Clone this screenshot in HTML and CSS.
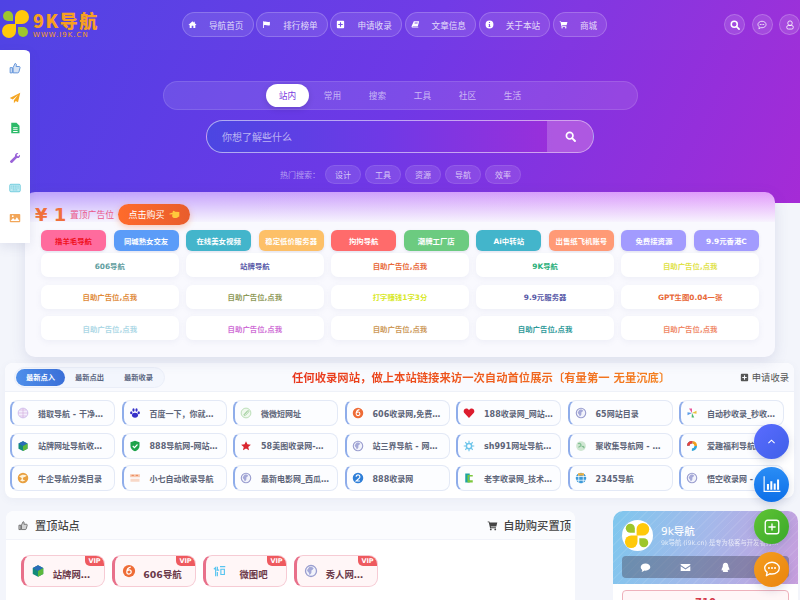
FILE: index.html
```html
<!DOCTYPE html>
<html lang="zh">
<head>
<meta charset="utf-8">
<title>9K导航</title>
<link rel="stylesheet" href="styles.css">
</head>
<body>
<svg class="defs" aria-hidden="true">
  <symbol id="i-search" viewBox="0 0 16 16"><circle cx="6.800" cy="6.800" r="4.800" fill="none" stroke="currentColor" stroke-width="2.400"/><path d="M10.400 10.400 14.500 14.500" stroke="currentColor" stroke-width="2.800" stroke-linecap="round"/></symbol>
  <symbol id="i-globe" viewBox="0 0 16 16"><circle cx="8" cy="8" r="6.300" fill="#f2f3fb" stroke="#9a9ecf" stroke-width="1.500"/><path d="M6 3.500C8 3 10 3.500 11 5 10 7 8 6.500 8.500 8.500 9 10.500 7 12 6 12.500 6.500 10 4 9 3.500 7.500 4 6 5 5 6 3.500z" fill="#a5a9d8"/></symbol>
  <symbol id="i-thumb" viewBox="0 0 16 16"><path d="M1.500 7.500h3v7h-3zM5.500 7.500 8 2c1.500 0 2 1 1.800 2.200L9.500 6h4c1 0 1.500.8 1.200 1.700l-1.500 5.600c-.2.800-.8 1.200-1.600 1.200H5.500z" fill="currentColor" fill-opacity=".25" stroke="currentColor" stroke-width="1.200" stroke-linejoin="round"/></symbol>
  <symbol id="i-chat" viewBox="0 0 16 16"><path d="M8 2c3.600 0 6.500 2.300 6.500 5.200S11.600 12.400 8 12.400c-.7 0-1.300-.1-1.900-.2L3 14l.7-3C2.300 10.100 1.500 8.700 1.500 7.200 1.500 4.300 4.400 2 8 2z" fill="none" stroke="currentColor" stroke-width="1.200" stroke-linejoin="round"/><circle cx="5.300" cy="7.200" r=".9" fill="currentColor"/><circle cx="8" cy="7.200" r=".9" fill="currentColor"/><circle cx="10.700" cy="7.200" r=".9" fill="currentColor"/></symbol>
  <symbol id="i-clover" viewBox="0 0 30 30"><path d="M14 15V8A7 7 0 1 1 21 15z" fill="#ffc90a"/><path d="M15 15V22A7 7 0 1 1 8 15z" fill="#ffc90a"/><path d="M12 12H7A5 5 0 1 1 12 7z" fill="#9ec62c"/><path d="M17 18H22A5 5 0 1 1 17 23z" fill="#9ec62c"/></symbol>
</svg>

<section class="hero">
  <header class="topbar">
    <a class="logo">
      <svg class="logo-mark"><use href="#i-clover"/></svg>
      <span class="logo-text"><b>9K导航</b><small>WWW.I9K.CN</small></span>
    </a>
    <nav class="mainnav">
      <a class="navpill"><svg class="nav-ic" viewBox="0 0 16 16"><path d="M8 2 1 8.300l1 1L3 8.500V14h3.500v-4h3v4H13V8.500l1 .8 1-1-3-2.700V3h-2v1.800z" fill="#fff"/></svg>导航首页</a>
      <a class="navpill"><svg class="nav-ic" viewBox="0 0 16 16"><path d="M2 2v12h1.500V9.500c3-1.500 5.500 1.200 10.500 0V3C9 4.500 6.500 1.500 3.500 3V2z" fill="#fff"/></svg>排行榜单</a>
      <a class="navpill"><svg class="nav-ic" viewBox="0 0 16 16"><path fill-rule="evenodd" d="M3 1.500h10A1.500 1.500 0 0 1 14.500 3v10a1.500 1.500 0 0 1-1.500 1.500H3A1.500 1.500 0 0 1 1.500 13V3A1.500 1.500 0 0 1 3 1.500zM7 4v3H4v2h3v3h2V9h3V7H9V4z" fill="#fff"/></svg>申请收录</a>
      <a class="navpill"><svg class="nav-ic" viewBox="0 0 16 16"><path fill-rule="evenodd" d="M5 2h9.500l-2.500 9.500H3.500c-.8 0-1 1 0 1H12l1-.5v1.500H3c-2 0-2.300-1.700-1.800-3zM6.500 4.500 6.200 6h5.500l.3-1.500z" fill="#fff"/></svg>文章信息</a>
      <a class="navpill"><svg class="nav-ic" viewBox="0 0 16 16"><path fill-rule="evenodd" d="M8 1a7 7 0 1 1 0 14A7 7 0 0 1 8 1zM7 3.500v2h2v-2zM6.300 7v1.200H7v3h-.7v1.200h3.400v-1.200H9V7z" fill="#fff"/></svg>关于本站</a>
      <a class="navpill"><svg class="nav-ic" viewBox="0 0 16 16"><path d="M1 2h2.500l.4 1.500H15l-1.500 6H5.500l.3 1.200H13V12H4.500L2.500 3.300H1z" fill="#fff"/><circle cx="5.500" cy="13.700" r="1.300" fill="#fff"/><circle cx="12" cy="13.700" r="1.300" fill="#fff"/></svg>商城</a>
    </nav>
    <div class="toolbtns">
      <a class="circle"><svg class="circle-ic"><use href="#i-search"/></svg></a>
      <a class="circle"><svg class="circle-ic"><use href="#i-chat"/></svg></a>
      <a class="circle"><svg class="circle-ic" viewBox="0 0 16 16"><circle cx="8" cy="5" r="3.600" fill="none" stroke="#fff" stroke-width="1.300"/><rect x="2.800" y="8.800" width="10.400" height="5.700" rx="2.400" fill="none" stroke="#fff" stroke-width="1.300"/></svg></a>
    </div>
  </header>

  <div class="finder">
    <div class="scopes">
      <a class="scope active">站内</a><a class="scope">常用</a><a class="scope">搜索</a><a class="scope">工具</a><a class="scope">社区</a><a class="scope">生活</a>
    </div>
    <form class="searchbox">
      <span class="placeholder">你想了解些什么</span>
      <span class="searchbtn"><svg class="searchbtn-ic"><use href="#i-search"/></svg></span>
    </form>
    <div class="hot">
      <span class="hot-label">热门搜索：</span>
      <a class="hotpill">设计</a><a class="hotpill">工具</a><a class="hotpill">资源</a><a class="hotpill">导航</a><a class="hotpill">效率</a>
    </div>
  </div>
</section>

<aside class="rail">
  <svg class="rail-ic c-blue"><use href="#i-thumb"/></svg>
  <svg class="rail-ic" viewBox="0 0 16 16"><path d="M15 1 1 8l4 2 7-6-5.500 7v4l2.500-3 3 1.500z" fill="#f5a623"/></svg>
  <svg class="rail-ic" viewBox="0 0 16 16"><path fill-rule="evenodd" d="M3 1h7l4 4v10H3zM5.500 7v1.200h6V7zm0 2.500v1.200h6V9.500zm0 2.500v1.200h6V12z" fill="#2dbb6a"/></svg>
  <svg class="rail-ic" viewBox="0 0 16 16"><path d="M14.500 3.500 12 6 10 4l2.500-2.500C10 .5 7.500 2.500 8 5.500L1.500 12c-1 1 1.500 3.500 2.500 2.500L10.500 8c3 .5 5-2 4-4.500z" fill="#9a63d8"/></svg>
  <svg class="rail-ic" viewBox="0 0 16 16"><rect x="1" y="3" width="14" height="10" rx="1.500" fill="#bfeaf2" stroke="#56c2d6"/><path d="M3 5.500h10M3 8h10M5 10.500h6" stroke="#56c2d6" stroke-dasharray="1.500 .8"/></svg>
  <svg class="rail-ic" viewBox="0 0 16 16"><rect x="1" y="2.500" width="14" height="11" rx="1.200" fill="#f2a65a"/><path d="M2 12l3.500-4 2.500 2.500 2.500-3.500L14 12z" fill="#fff"/><circle cx="5" cy="5.500" r="1.200" fill="#fff"/></svg>
</aside>

<section class="adpanel">
  <div class="ad-head">
    <span class="ad-price">¥ 1</span>
    <span class="ad-label">置顶广告位</span>
    <a class="ad-buy">点击购买
      <svg class="ad-hand" viewBox="0 0 16 16"><path d="M15 4.500 9 4 7 2.500C5.500 3 5 4 5.500 5L1 6.500c-.8.700-.3 1.500.5 1.500L5 7.500 4.500 10c.3 2 2 3 4 3h2c2 0 3-2 4.500-2z" fill="#ffc93c"/></svg>
    </a>
  </div>
  <div class="ad-pills">
    <a class="adpill p1 red">撸羊毛导航</a>
    <a class="adpill p2">同城熟女交友</a>
    <a class="adpill p3">在线美女视频</a>
    <a class="adpill p4">稳定低价服务器</a>
    <a class="adpill p5">拘拘导航</a>
    <a class="adpill p6">潮牌工厂店</a>
    <a class="adpill p3">Ai中转站</a>
    <a class="adpill p8">出售纸飞机账号</a>
    <a class="adpill p9">免费接资源</a>
    <a class="adpill p9">9.9元香港C</a>
  </div>
  <div class="ad-grid">
    <a class="adcell t1">606导航</a>
    <a class="adcell t2">站牌导航</a>
    <a class="adcell t3">自助广告位,点我</a>
    <a class="adcell t4">9K导航</a>
    <a class="adcell t5">自助广告位,点我</a>
    <a class="adcell t6">自助广告位,点我</a>
    <a class="adcell t7">自助广告位,点我</a>
    <a class="adcell t8">打字赚钱1字3分</a>
    <a class="adcell t2">9.9元服务器</a>
    <a class="adcell t3">GPT生图0.04一张</a>
    <a class="adcell t9">自助广告位,点我</a>
    <a class="adcell t10">自助广告位,点我</a>
    <a class="adcell t11">自助广告位,点我</a>
    <a class="adcell t12">自助广告位,点我</a>
    <a class="adcell t13">自助广告位,点我</a>
  </div>
</section>

<section class="recent">
  <div class="recent-head">
    <div class="rtabs"><a class="rtab active">最新点入</a><a class="rtab">最新点出</a><a class="rtab">最新收录</a></div>
    <strong class="notice">任何收录网站，做上本站链接来访一次自动首位展示〔有量第一 无量沉底〕</strong>
    <a class="apply"><svg class="apply-ic" viewBox="0 0 16 16"><path fill-rule="evenodd" d="M3 1.500h10A1.500 1.500 0 0 1 14.500 3v10a1.500 1.500 0 0 1-1.500 1.500H3A1.500 1.500 0 0 1 1.500 13V3A1.500 1.500 0 0 1 3 1.500zM7 4v3H4v2h3v3h2V9h3V7H9V4z" fill="#555"/></svg>申请收录</a>
  </div>
  <div class="sites">
    <a class="site"><svg class="site-ic" viewBox="0 0 16 16"><circle cx="8" cy="8" r="6.500" fill="#f3eefc" stroke="#c7b3ea"/><path d="M8 1.500v13M1.500 8h13M3.500 4h9M3.500 12h9" stroke="#d5a8dc" stroke-width=".8"/></svg><span>猎取导航 - 干净…</span></a>
    <a class="site"><svg class="site-ic" viewBox="0 0 16 16"><ellipse cx="8" cy="11" rx="4" ry="3.200" fill="#3530c8"/><ellipse cx="3" cy="7.500" rx="1.500" ry="2" fill="#3530c8"/><ellipse cx="13" cy="7.500" rx="1.500" ry="2" fill="#3530c8"/><ellipse cx="6" cy="4" rx="1.500" ry="2.200" fill="#3530c8"/><ellipse cx="10" cy="4" rx="1.500" ry="2.200" fill="#3530c8"/></svg><span>百度一下，你就…</span></a>
    <a class="site"><svg class="site-ic" viewBox="0 0 16 16"><circle cx="8" cy="8" r="6.500" fill="#eff8ee" stroke="#a9d6a4"/><path d="M5 10.500 10 5c1.500-1 2.500 1 1.200 2L7 11.300c-1 .7-2-.3-1.200-1.300L10 5.700" fill="none" stroke="#9acb96" stroke-width="1.100"/></svg><span>微微短网址</span></a>
    <a class="site"><svg class="site-ic" viewBox="0 0 16 16"><circle cx="8" cy="8" r="7" fill="#ee6c37"/><path d="M10 3.500C7.500 4 5.500 6 5.500 9a2.500 2.500 0 1 0 5 0c0-1.500-1-2.300-2.300-2.300-.8 0-1.500.4-2 1" fill="none" stroke="#fff" stroke-width="1.400"/></svg><span>606收录网,免费…</span></a>
    <a class="site"><svg class="site-ic" viewBox="0 0 16 16"><path d="M8 14.500 1.800 8C-.3 5.500 1.500 2 4.500 2 6 2 7.200 2.800 8 4c.8-1.200 2-2 3.500-2 3 0 4.800 3.500 2.700 6z" fill="#dc1c2e"/></svg><span>188收录网_网站…</span></a>
    <a class="site"><svg class="site-ic"><use href="#i-globe"/></svg><span>65网站目录</span></a>
    <a class="site"><svg class="site-ic" viewBox="0 0 16 16"><path d="M8 8 4 2h4z" fill="#e85a9c"/><path d="M8 8l6-3v4z" fill="#e8c23c"/><path d="M8 8l3 6H7.500z" fill="#4cb86c"/><path d="M8 8l-6 3V7z" fill="#5a9ce8"/></svg><span>自动秒收录_秒收…</span></a>

    <a class="site"><svg class="site-ic" viewBox="0 0 16 16"><path d="M8 1.500 14 4.500v7L8 14.500 2 11.500v-7z" fill="#128a7a"/><path d="M8 8 2 4.500 8 1.500l6 3z" fill="#2a6cb8"/><path d="M8 8v6.500l6-3v-7z" fill="#5cb83c"/></svg><span>站牌网址导航收…</span></a>
    <a class="site"><svg class="site-ic" viewBox="0 0 16 16"><path d="M8 1 14 3v5c0 3.500-2.500 5.700-6 7-3.500-1.300-6-3.500-6-7V3z" fill="#1fa34a"/><path d="M5 8l2.300 2.300L11.300 6" fill="none" stroke="#fff" stroke-width="1.500"/></svg><span>888导航网-网站…</span></a>
    <a class="site"><svg class="site-ic" viewBox="0 0 16 16"><path d="M8 1.500l1.900 4.300 4.600.4-3.500 3 1.100 4.600L8 11.400l-4.100 2.400L5 9.200l-3.500-3 4.600-.4z" fill="#d9252e"/></svg><span>58美图收录网-…</span></a>
    <a class="site"><svg class="site-ic"><use href="#i-globe"/></svg><span>站三界导航 - 网…</span></a>
    <a class="site"><svg class="site-ic" viewBox="0 0 16 16"><circle cx="8" cy="8" r="3.500" fill="none" stroke="#6cc4ea" stroke-width="2"/><path d="M8 1v3M8 12v3M1 8h3M12 8h3M3 3l2 2M11 11l2 2M13 3l-2 2M5 11l-2 2" stroke="#6cc4ea" stroke-width="1.500"/></svg><span>sh991网址导航…</span></a>
    <a class="site"><svg class="site-ic" viewBox="0 0 16 16"><circle cx="8" cy="8" r="6.500" fill="#cfe6d2"/><path d="M4 5c2-1 4 0 4 2s-3 1-3 3M9 9c2-1 3 0 3 2" stroke="#83c093" stroke-width="1.800" fill="none"/></svg><span>聚收集导航网 - …</span></a>
    <a class="site"><svg class="site-ic" viewBox="0 0 16 16"><circle cx="8" cy="8" r="5" fill="none" stroke="#32a5d8" stroke-width="3.400" stroke-dasharray="7.800 7.900"/><circle cx="8" cy="8" r="5" fill="none" stroke="#f0a020" stroke-width="3.400" stroke-dasharray="7.800 23.600" stroke-dashoffset="7.800"/><circle cx="8" cy="8" r="5" fill="none" stroke="#e8413c" stroke-width="3.400" stroke-dasharray="7.800 23.600" stroke-dashoffset="-15.700"/></svg><span>爱趣福利导航网…</span></a>

    <a class="site"><svg class="site-ic" viewBox="0 0 16 16"><circle cx="8" cy="8" r="7" fill="#e8a040"/><path d="M3 6c3-3 7-3 10-1-2 2-4 1-5 3s1 3 3 3c-2 2-5 2-7 0 2-1 3-2 2-3S4 7 3 6z" fill="#fff2d8"/></svg><span>牛企导航分类目录</span></a>
    <a class="site"><svg class="site-ic" viewBox="0 0 16 16"><rect x="1.500" y="3" width="13" height="4" fill="#f6c7ae"/><rect x="2" y="9" width="12" height="4" fill="#f8d8c8"/><path d="M3.500 4.500h3M9 4.500h3" stroke="#e8703c"/></svg><span>小七自动收录导航</span></a>
    <a class="site"><svg class="site-ic"><use href="#i-globe"/></svg><span>最新电影网_西瓜…</span></a>
    <a class="site"><svg class="site-ic" viewBox="0 0 16 16"><circle cx="8" cy="8" r="7" fill="#2f7fd8"/><path d="M5.500 6.300a2.500 2.500 0 1 1 4.500 1.500L5.500 12h5" fill="none" stroke="#fff" stroke-width="1.500"/></svg><span>888收录网</span></a>
    <a class="site"><svg class="site-ic" viewBox="0 0 16 16"><path d="M3 2h6v12H3z" fill="#1fa3a0"/><path d="M6 4h7v2H8v5h5v3H6z" fill="#7cc83c"/></svg><span>老李收录网_技术…</span></a>
    <a class="site"><svg class="site-ic" viewBox="0 0 16 16"><circle cx="8" cy="8" r="7" fill="#3c9ad8"/><path d="M1 6h14M5 1v14M11 1v14M1 11h14" stroke="#fff"/><path d="M4 1.500h8v3H4z" fill="#f0b040"/></svg><span>2345导航</span></a>
    <a class="site"><svg class="site-ic"><use href="#i-globe"/></svg><span>悟空收录网 - …</span></a>
  </div>
</section>

<section class="lower">
  <div class="pinned">
    <div class="pinned-head">
      <h2 class="pinned-title"><svg class="pinned-ic"><use href="#i-thumb"/></svg>置顶站点</h2>
      <a class="pinned-buy"><svg class="pinned-cart" viewBox="0 0 16 16"><path d="M1 2h2.500l.4 1.500H15l-1.500 6H5.500l.3 1.200H13V12H4.500L2.500 3.300H1z" fill="#444"/><circle cx="5.500" cy="13.700" r="1.300" fill="#444"/><circle cx="12" cy="13.700" r="1.300" fill="#444"/></svg>自助购买置顶</a>
    </div>
    <div class="vips">
      <a class="vip"><svg class="vip-ic" viewBox="0 0 16 16"><path d="M8 1.500 14 4.500v7L8 14.500 2 11.500v-7z" fill="#128a7a"/><path d="M8 8 2 4.500 8 1.500l6 3z" fill="#2a6cb8"/><path d="M8 8v6.500l6-3v-7z" fill="#5cb83c"/></svg><span>站牌网…</span><i class="vip-tag">VIP</i></a>
      <a class="vip"><svg class="vip-ic" viewBox="0 0 16 16"><circle cx="8" cy="8" r="7" fill="#ee6c37"/><path d="M10 3.500C7.500 4 5.500 6 5.500 9a2.500 2.500 0 1 0 5 0c0-1.500-1-2.300-2.300-2.300-.8 0-1.500.4-2 1" fill="none" stroke="#fff" stroke-width="1.400"/></svg><span>606导航</span><i class="vip-tag">VIP</i></a>
      <a class="vip"><svg class="vip-ic" viewBox="0 0 16 16"><path d="M1 6l2-2v10M5 3v4M4 7h3M8 3h6M9 6h4v6h-4zM5 9v5" fill="none" stroke="#58c4f0" stroke-width="1.300"/></svg><span>微图吧</span><i class="vip-tag">VIP</i></a>
      <a class="vip"><svg class="vip-ic"><use href="#i-globe"/></svg><span>秀人网…</span><i class="vip-tag">VIP</i></a>
    </div>
  </div>
  <aside class="profile">
    <div class="profile-top">
      <div class="profile-id">
        <span class="avatar"><svg class="avatar-mark"><use href="#i-clover"/></svg></span>
        <div class="profile-text"><b>9k导航</b><small>9k导航 (i9k.cn) 是专为极客与开发者打…</small></div>
      </div>
      <div class="social">
        <svg class="social-ic" viewBox="0 0 16 16"><path d="M8 2c3.800 0 7 2.300 7 5.300s-3.200 5.300-7 5.300l-1.500-.1C5 13.800 3.500 14.500 2 14.500c.8-.8 1.300-1.800 1.300-3C1.900 10.500 1 9 1 7.300 1 4.300 4.200 2 8 2z" fill="#fff"/></svg>
        <svg class="social-ic" viewBox="0 0 16 16"><path d="M1 3h14v1.500L8 9 1 4.500zM1 6.300l7 4.500 7-4.500V13H1z" fill="#fff"/></svg>
        <svg class="social-ic" viewBox="0 0 16 16"><path d="M8 1c2.800 0 4 2.200 4 4.500 0 .5 0 1 .3 1.500.8 1.200 1.700 3 1.200 5-.5.500-1.200-.5-1.500-1-.2 1-.7 1.800-1.300 2.200.8.300 1.300.700 1.200 1.300H4.100c-.1-.6.400-1 1.200-1.300C4.700 13.300 4.200 12.500 4 11.500c-.3.500-1 1.500-1.500 1-.5-2 .4-3.800 1.200-5 .3-.5.300-1 .3-1.500C4 3.200 5.200 1 8 1z" fill="#fff"/></svg>
        <span class="social-gap"></span>
      </div>
    </div>
    <div class="profile-body"><div class="counter">710</div></div>
  </aside>
</section>

<div class="floats">
  <a class="fab fab-up"><svg class="fab-ic" viewBox="0 0 16 16"><path d="M3.500 10.500 8 6l4.500 4.500" fill="none" stroke="#fff" stroke-width="1.500"/></svg></a>
  <a class="fab fab-chart"><svg class="fab-ic big" viewBox="0 0 16 16"><path d="M1 1v13.500h14.500" fill="none" stroke="#fff"/><path d="M3.500 8h1.800v5H3.500zM6.500 5.500h1.800V13H6.500zM9.500 7.500h1.800V13H9.500zM12.500 4h1.800v9h-1.800z" fill="#fff"/></svg></a>
  <a class="fab fab-add"><svg class="fab-ic big" viewBox="0 0 16 16"><rect x="2" y="2" width="12" height="12" rx="2" fill="none" stroke="#fff" stroke-width="1.200"/><path d="M8 4.800v6.400M4.800 8h6.400" stroke="#fff" stroke-width="1.200"/></svg></a>
  <a class="fab fab-chat"><svg class="fab-ic big"><use href="#i-chat"/></svg></a>
</div>
</body>
</html>
```
FILE: styles.css
```css
* { box-sizing: border-box; }
html, body { margin: 0; height: 600px; overflow: hidden; }
body {
  background: #f3f5fb;
  font-family: "DejaVu Sans", "Noto Sans CJK SC", sans-serif;
  color: #444;
}
a { text-decoration: none; color: inherit; }
.defs { display: none; }

/* hero */
.hero {
  height: 203px;
  background: linear-gradient(115deg, #4d41e4 0%, #6f38e6 50%, #a52bd6 100%);
}
.topbar {
  height: 50px;
  display: flex;
  align-items: flex-start;
  padding-top: 12px;
  background: rgba(255, 255, 255, .015);
}
.logo { display: flex; align-items: flex-start; width: 182px; margin-top: -3px; gap: 2px; padding-left: 1px; }
.logo-mark { width: 30px; height: 30px; flex: none; }
.logo-text { display: flex; flex-direction: column; gap: 2px; margin-top: 2px; color: #f7a021; }
.logo-text b { font: 900 18px/18px "Noto Sans CJK SC", sans-serif; letter-spacing: 1.500px; white-space: nowrap; }
.logo-text small { font: 400 7px/8px "DejaVu Sans", sans-serif; letter-spacing: 1px; white-space: nowrap; }

.mainnav { display: flex; gap: 2.500px; }
.navpill {
  height: 25px;
  display: flex;
  align-items: center;
  gap: 12px;
  padding: 0 9.300px 0 5px;
  border: 1px solid rgba(255, 255, 255, .2);
  border-radius: 13px;
  background: rgba(255, 255, 255, .1);
  font-size: 8.600px;
  color: rgba(255, 255, 255, .8);
  white-space: nowrap;
}
.nav-ic { width: 9px; height: 9px; flex: none; }

.toolbtns { margin-left: auto; display: flex; gap: 6.300px; margin-top: 2px; }
.circle {
  width: 21px; height: 21px;
  display: flex; align-items: center; justify-content: center;
  border-radius: 50%;
  border: 1px solid rgba(255, 255, 255, .2);
  background: rgba(255, 255, 255, .12);
  color: #fff;
}
.circle-ic { width: 10px; height: 10px; }

.finder { display: flex; flex-direction: column; align-items: center; padding-top: 31px; }
.scopes {
  width: 475px; height: 29px;
  display: flex; align-items: center; justify-content: center; gap: 2px;
  border: 1px solid rgba(255, 255, 255, .12);
  border-radius: 15px;
  background: rgba(255, 255, 255, .1);
}
.scope {
  width: 43px; height: 23px;
  display: flex; align-items: center; justify-content: center;
  border-radius: 12px;
  font-size: 8.700px;
  color: rgba(255, 255, 255, .6);
}
.scope.active { background: #fff; color: #7a3be0; box-shadow: 0 2px 6px rgba(0, 0, 0, .12); }

.searchbox {
  width: 388px; height: 33px;
  margin: 10px 0 0;
  display: flex; align-items: center; justify-content: space-between;
  border: 1px solid rgba(255, 255, 255, .55);
  border-radius: 17px;
  background: linear-gradient(90deg, #4b46e2, #6f39e6 45%, #9a2fda 90%);
  overflow: hidden;
}
.placeholder { margin-left: 15px; font-size: 10px; color: rgba(255, 255, 255, .6); }
.searchbtn {
  width: 46px; height: 31px;
  display: flex; align-items: center; justify-content: center;
  background: rgba(255, 255, 255, .2);
  color: #fff;
}
.searchbtn-ic { width: 11px; height: 11px; }

.hot { display: flex; align-items: center; gap: 4px; margin-top: 12px; margin-left: 1px; }
.hot-label { font-size: 8px; color: rgba(255, 255, 255, .5); width: 41px; white-space: nowrap; }
.hotpill {
  width: 36px; height: 19px;
  display: flex; align-items: center; justify-content: center;
  border: 1px solid rgba(255, 255, 255, .1);
  border-radius: 10px;
  background: rgba(255, 255, 255, .1);
  font-size: 8px;
  color: rgba(255, 255, 255, .7);
}

/* side rail */
.rail {
  position: fixed;
  left: 0; top: 50px;
  width: 30px; height: 193px;
  display: flex; flex-direction: column; align-items: center;
  padding-top: 12px; gap: 18px;
  background: #fff;
  border-top-right-radius: 6px 4px;
  box-shadow: 0 4px 12px rgba(70, 80, 140, .12);
  z-index: 3;
}
.rail-ic { width: 12px; height: 12px; flex: none; }
.c-blue { color: #5b8fd8; }

/* ad panel */
.adpanel {
  position: relative;
  margin: -11px 25px 0;
  height: 165px;
  padding: 12px 16px 0;
  border-radius: 10px;
  background: linear-gradient(100deg, #bea5fc, #e29bfa) top / 100% 30px no-repeat, #f9f9fe;
  box-shadow: 0 4px 14px rgba(80, 90, 150, .15);
  overflow: hidden;
}
.adpanel::before {
  content: "";
  position: absolute;
  left: 0; right: 0; top: 0; height: 32px;
  background: linear-gradient(180deg, rgba(249, 249, 254, 0), #f9f9fe);
}
.ad-head { position: relative; display: flex; align-items: center; height: 21px; margin-left: -6px; }
.ad-price { font-size: 18px; font-weight: 700; color: #f0703c; width: 35px; white-space: nowrap; }
.ad-label { font-size: 8.800px; color: #ea5a8a; width: 48px; white-space: nowrap; }
.ad-buy {
  display: flex; align-items: center; justify-content: center; gap: 4px;
  width: 72px; height: 21px;
  border-radius: 11px;
  background: linear-gradient(90deg, #ff6b2b, #e85d2c);
  box-shadow: 0 2px 6px rgba(240, 110, 50, .35);
  color: #fff;
  font-size: 9px;
}
.ad-hand { width: 11px; height: 11px; }
.ad-pills {
  position: relative;
  margin-top: 5px;
  display: grid;
  grid-template-columns: repeat(10, 1fr);
  column-gap: 7.500px;
}
.adpill {
  display: flex; align-items: center; justify-content: center;
  height: 21px;
  border-radius: 6px;
  color: #fff;
  font-size: 7.400px;
  font-weight: 700;
  white-space: nowrap;
  box-shadow: 0 1px 3px rgba(100, 100, 150, .15);
}
.p1 { background: #ff6b9d; }
.red { color: #f01020; }
.p2 { background: #5b9cf8; }
.p3 { background: #43b5cb; }
.p4 { background: #fdc068; }
.p5 { background: #ff6b6b; }
.p6 { background: #6ccb80; }
.p8 { background: #ff9a76; }
.p9 { background: #a29bfe; }
.ad-grid {
  position: relative;
  margin-top: 2px;
  display: grid;
  grid-template-columns: repeat(5, 1fr);
  grid-auto-rows: 24px;
  gap: 7.500px;
}
.adcell {
  display: flex; align-items: center; justify-content: center;
  border-radius: 7px;
  background: #fff;
  box-shadow: 0 2px 6px rgba(100, 110, 170, .08);
  font-size: 7.400px;
  font-weight: 700;
  white-space: nowrap;
}
.t1 { color: #5f9ea0; }
.t2 { color: #5a5aa8; }
.t3 { color: #e8693a; }
.t4 { color: #2bb07a; }
.t5 { color: #dfe24a; }
.t6 { color: #e08a3a; }
.t7 { color: #8f9a5a; }
.t8 { color: #d8e82a; }
.t9 { color: #add8e6; }
.t10 { color: #cf6fd6; }
.t11 { color: #cd9a5b; }
.t12 { color: #2f9a9a; }
.t13 { color: #f08a6a; }

/* recent */
.recent {
  margin: 6px 6px 0 5px;
  height: 135px;
  border-radius: 8px;
  background: #fff;
  box-shadow: 0 2px 8px rgba(90, 100, 160, .06);
  overflow: hidden;
}
.recent-head {
  height: 29px;
  display: flex; align-items: center;
  padding: 0 5px 0 9px;
  border-bottom: 1px solid #eef1f8;
  background: #f9fafe;
}
.rtabs {
  display: flex; align-items: center; height: 21px; width: 151px;
  padding: 0 1px;
  border: 1px solid #eaeef8;
  border-radius: 11px;
  background: #f3f6fd;
}
.rtab { width: 50px; height: 17px; display: flex; align-items: center; justify-content: center; border-radius: 9px; font-size: 7.300px; font-weight: 600; color: #5a6580; }
.rtab.active { background: linear-gradient(90deg, #4f8fea, #3a6fd8); color: #fff; }
.notice {
  margin-left: 127px;
  font-size: 11.350px;
  white-space: nowrap;
  background: linear-gradient(90deg, #e8351c, #f5821f);
  -webkit-background-clip: text;
  background-clip: text;
  color: transparent;
  font-weight: 700;
}
.apply { margin-left: auto; display: flex; align-items: center; gap: 3px; font-size: 9.300px; color: #555; white-space: nowrap; }
.apply-ic { width: 9px; height: 9px; }
.sites {
  display: grid;
  grid-template-columns: repeat(7, 1fr);
  gap: 6.500px;
  padding: 8px 10px 0 5px;
}
.site {
  height: 26px;
  display: flex; align-items: center;
  padding-left: 5px;
  gap: 9px;
  border: 1px solid #e3e9f6;
  border-left: 2px solid #8fadea;
  border-radius: 8px;
  background: #fcfdff;
  font-size: 8px;
  font-weight: 600;
  color: #5c6478;
  min-width: 0;
  white-space: nowrap;
}
.site-ic { width: 12px; height: 12px; flex: none; }

/* lower */
.lower { display: flex; gap: 38px; margin: 13px 2px 0 6px; align-items: flex-start; }
.pinned {
  width: 569px; height: 120px;
  border-radius: 8px;
  background: #fff;
  overflow: hidden;
}
.pinned-head {
  height: 29px;
  display: flex; align-items: center; justify-content: space-between;
  padding: 0 4px 0 12px;
  border-bottom: 1px solid #f1f3f9;
  background: #fbfcfe;
}
.pinned-title { margin: 0; display: flex; align-items: center; gap: 7px; font-size: 11.200px; font-weight: 500; color: #444; }
.pinned-ic { width: 10px; height: 11px; color: #555; }
.pinned-buy { display: flex; align-items: center; gap: 5px; font-size: 11.300px; font-weight: 500; color: #444; }
.pinned-cart { width: 11px; height: 11px; }
.vips { display: flex; gap: 7px; padding: 15px 15px 0; }
.vip {
  position: relative;
  width: 84px; height: 32px;
  display: flex; align-items: center;
  padding-left: 7px;
  gap: 3px;
  border: 1px solid #f6cbd4;
  border-left: 3px solid #e8708a;
  border-radius: 9px;
  background: #fff6f7;
  font-size: 9.400px;
  font-weight: 600;
  color: #6b3a4a;
  overflow: hidden;
  white-space: nowrap;
}
.vip span { flex: 1; text-align: center; padding: 5px 9px 0 0; }
.vip-ic { width: 14px; height: 14px; flex: none; }
.vip-tag {
  position: absolute;
  top: 0; right: 0;
  width: 19px; height: 10px;
  display: flex; align-items: center; justify-content: center;
  border-bottom-left-radius: 5px;
  background: #ee5a5f;
  color: #fff;
  font: 700 6.500px "DejaVu Sans", sans-serif;
}

.profile { width: 185px; border-radius: 10px 10px 0 0; background: #fff; overflow: hidden; }
.profile-top {
  height: 73px;
  padding: 9px 9px 0;
  background:
    repeating-linear-gradient(135deg, rgba(255, 255, 255, .08) 0 1px, rgba(255, 255, 255, 0) 1px 6px),
    linear-gradient(105deg, #7ec7ee, #a5b8ea 50%, #c79edd);
}
.profile-id { display: flex; align-items: center; gap: 8px; height: 31px; }
.avatar { width: 31px; height: 31px; flex: none; display: flex; align-items: center; justify-content: center; border-radius: 50%; background: #fff; }
.avatar-mark { width: 27px; height: 27px; }
.profile-text { min-width: 0; display: flex; flex-direction: column; color: #fff; }
.profile-text b { font-size: 10.500px; font-weight: 500; line-height: 13px; }
.profile-text small { font-size: 6.300px; line-height: 9px; opacity: .7; white-space: nowrap; }
.social {
  height: 22px;
  margin-top: 5px;
  display: flex; align-items: center; justify-content: space-around;
  padding: 0 4px;
  border-radius: 4px;
  background: rgba(70, 70, 90, .42);
}
.social-ic { width: 11px; height: 11px; }
.social-gap { width: 11px; }
.profile-body { padding: 6px 9px 0; }
.counter {
  height: 30px;
  border: 1px solid #eeb1bb;
  border-radius: 4px;
  background: #fff6f7;
  text-align: center;
  font-size: 10px;
  font-weight: 700;
  line-height: 14px;
  padding-top: 5px;
  color: #d43a4a;
}

/* floating buttons */
.floats {
  position: fixed;
  right: 11px; top: 424px;
  display: flex; flex-direction: column; gap: 7.500px;
  z-index: 5;
}
.fab {
  width: 35px; height: 35px;
  display: flex; align-items: center; justify-content: center;
  border-radius: 50%;
  box-shadow: 0 3px 8px rgba(60, 70, 120, .2);
  color: #fff;
}
.fab-up { background: linear-gradient(135deg, #5a6cff, #3f5fe8); }
.fab-chart { background: linear-gradient(180deg, #2a8df5, #0d6fe8); }
.fab-add { background: linear-gradient(135deg, #5fc435, #3aa82a); }
.fab-chat { background: linear-gradient(135deg, #f59e1f, #ea840e); }
.fab-ic { width: 11px; height: 11px; }
.fab-ic.big { width: 18px; height: 18px; }
```
